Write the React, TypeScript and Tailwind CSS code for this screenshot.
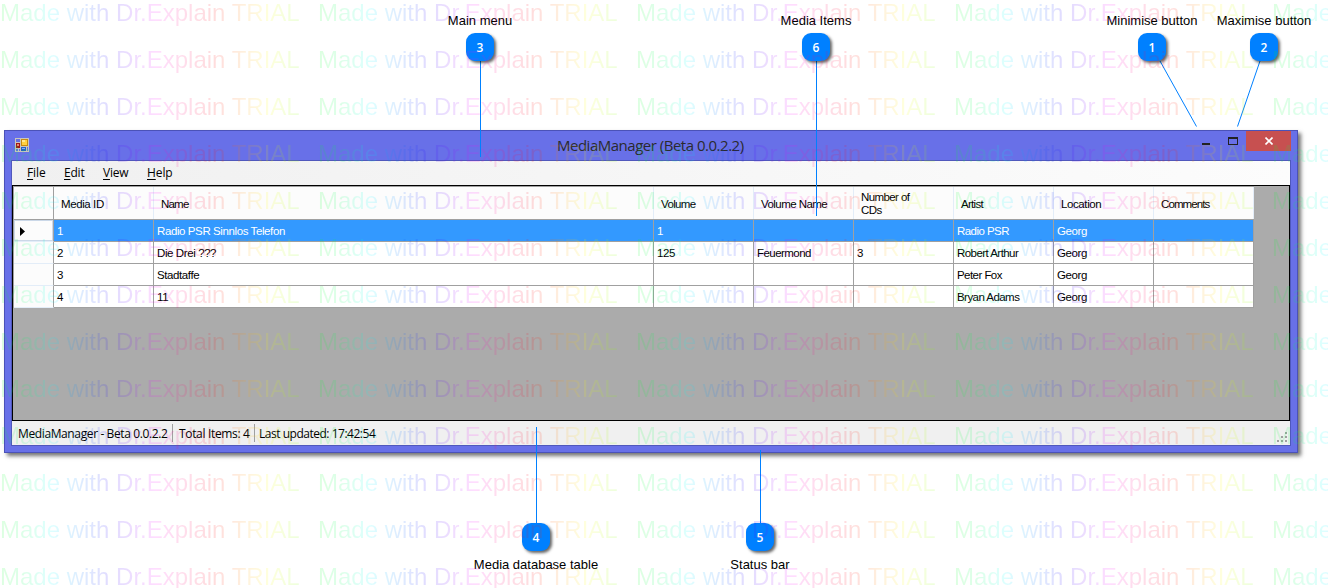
import React from "react";

const columns = [
  { label: "Media ID", width: "w-[100px]", text: "tracking-[-0.4px]" },
  { label: "Name", width: "w-[500px]", text: "tracking-[-0.8px]" },
  { label: "Volume", width: "w-[100px]", text: "tracking-[-0.65px]" },
  { label: "Volume Name", width: "w-[100px]", text: "tracking-[-0.55px] whitespace-nowrap" },
  { label: "Number of CDs", width: "w-[100px]", text: "tracking-[-0.6px]" },
  { label: "Artist", width: "w-[100px]", text: "tracking-[-0.7px]" },
  { label: "Location", width: "w-[100px]", text: "tracking-[-0.4px]" },
  { label: "Comments", width: "w-[100px]", text: "tracking-[-0.9px]" },
];

const rows = [
  ["1", "Radio PSR Sinnlos Telefon", "1", "", "", "Radio PSR", "Georg", ""],
  ["2", "Die Drei ???", "125", "Feuermond", "3", "Robert Arthur", "Georg", ""],
  ["3", "Stadtaffe", "", "", "", "Peter Fox", "Georg", ""],
  ["4", "11", "", "", "", "Bryan Adams", "Georg", ""],
];

const callouts = [
  { n: 1, label: "Minimise button", box: "left-[1092px] top-[14px]" },
  { n: 2, label: "Maximise button", box: "left-[1204px] top-[14px]" },
  { n: 3, label: "Main menu", box: "left-[420px] top-[14px]" },
  { n: 6, label: "Media Items", box: "left-[756px] top-[14px]" },
  { n: 4, label: "Media database table", box: "left-[476px] top-[523px]", below: true },
  { n: 5, label: "Status bar", box: "left-[700px] top-[523px]", below: true },
];

function AppIcon() {
  return (
    <svg width="14" height="14" viewBox="0 0 14 14" shapeRendering="crispEdges">
      <rect width="14" height="14" fill="#c9c6bd" />
      <rect x="1" y="1" width="4" height="3" fill="#6870e0" />
      <rect x="6" y="1" width="7" height="7" fill="#c88a10" />
      <rect x="7" y="2" width="5" height="5" fill="#ffd040" />
      <rect x="7" y="2" width="3" height="2" fill="#ffe890" />
      <rect x="1" y="5" width="4" height="5" fill="#a01818" />
      <rect x="2" y="6" width="2" height="2" fill="#f08070" />
      <rect x="6" y="9" width="5" height="4" fill="#2860c0" />
      <rect x="7" y="10" width="3" height="1" fill="#80b0ff" />
      <rect x="1" y="11" width="2" height="2" fill="#6870e0" />
      <rect x="4" y="11" width="1" height="2" fill="#6870e0" />
      <rect x="12" y="9" width="1" height="4" fill="#6870e0" />
    </svg>
  );
}

function TitleBar() {
  return (
    <div className="flex h-[29px] items-start">
      <div className="w-[400px] pl-[10px] pt-[7px]">
        <AppIcon />
      </div>
      <div className="flex-1 pl-[152px] pt-[4px] font-['Open_Sans',sans-serif] text-[15px] leading-[20px] text-[#2a2a2e]">
        <span className="whitespace-nowrap tracking-[-0.49px]">MediaManager (Beta 0.0.2.2)</span>
      </div>
      <div className="flex items-start">
        <div className="flex h-[20px] w-[26px] items-start pt-[12px]">
          <div className="h-[2px] w-[8px] bg-[#222]" />
        </div>
        <div className="flex h-[20px] w-[18px] items-start pt-[6px]">
          <div className="h-[8px] w-[10px] border border-t-2 border-[#222]" />
        </div>
        <div className="mr-[6px] flex h-[20px] w-[45px] items-center justify-center bg-[#c75050]">
          <svg width="8" height="8" viewBox="0 0 8 8" stroke="white" strokeWidth="1.6">
            <path d="M0.5 0.5 7.5 7.5M7.5 0.5 0.5 7.5" />
          </svg>
        </div>
      </div>
    </div>
  );
}

function MenuBar() {
  const items = [
    ["F", "ile", "w-[37px] tracking-[-0.1px]"],
    ["E", "dit", "w-[39px] tracking-[-0.2px]"],
    ["V", "iew", "w-[44px] tracking-[-0.2px]"],
    ["H", "elp", "w-[40px] tracking-[-0.1px]"],
  ];
  return (
    <div className="flex h-[24px] items-center bg-linear-to-r from-[#f0f0f0] to-[#fcfcfc] pl-[15px] font-['Open_Sans',sans-serif] text-[12px] text-black">
      {items.map(([key, rest, cls]) => (
        <div key={key} className={cls}>
          <span className="underline underline-offset-2">{key}</span>
          {rest}
        </div>
      ))}
    </div>
  );
}

function DataGrid() {
  return (
    <div className="h-[236px] border border-black bg-[#ababab] font-['Liberation_Sans',sans-serif] text-[11.5px] text-black">
      <div className="w-[1241px] border-l border-t border-[#a0a0a0]">
        <div className="flex h-[33px] border-b border-[#a0a0a0] bg-[#fcfcfc]">
          <div className="w-[40px] border-r border-[#a0a0a0]" />
          {columns.map((c) => (
            <div key={c.label} className={`${c.width} flex items-center border-r border-[#e3edf8] pl-[7px] pr-[30px] pt-[2px] leading-[13px] ${c.text}`}>
              {c.label}
            </div>
          ))}
        </div>
        {rows.map((r, i) => (
          <div key={i} className={`flex h-[22px] ${i === 0 ? "bg-[#3399ff] text-white" : "bg-white"}`}>
            <div
              className={`flex w-[40px] items-center border-b border-r border-b-[#e3edf8] border-r-[#a0a0a0] bg-[#fcfcfc] pl-[6px] ${i === 0 ? "shadow-[inset_1px_1px_0_#cbd8e8,inset_-1px_-1px_0_#cbd8e8]" : ""}`}
            >
              {i === 0 && (
                <svg width="5" height="9" viewBox="0 0 5 9" className="mt-px">
                  <path d="M0 0 5 4.5 0 9Z" fill="black" />
                </svg>
              )}
            </div>
            {r.map((v, j) => (
              <div
                key={j}
                className={`${columns[j].width} flex items-center whitespace-nowrap border-b border-r border-[#a0a0a0] pl-[3px] pt-[2px] ${j === 7 || j === 5 || j === 3 ? "tracking-[-0.55px]" : "tracking-[-0.4px]"}`}
              >
                {v}
              </div>
            ))}
          </div>
        ))}
      </div>
    </div>
  );
}

function StatusBar() {
  return (
    <div className="flex h-[24px] items-center bg-[#f0f0f0] pl-[6px] font-['Open_Sans',sans-serif] text-[12px] text-black">
      <div className="w-[154px] whitespace-nowrap pt-px tracking-[-0.38px]">MediaManager - Beta 0.0.2.2</div>
      <div className="h-[18px] w-px bg-[#a0a0a0]" />
      <div className="w-[81px] whitespace-nowrap pl-[6px] pt-px tracking-[-0.33px]">Total Items: 4</div>
      <div className="h-[18px] w-px bg-[#a0a0a0]" />
      <div className="flex-1 whitespace-nowrap pl-[4px] pt-px tracking-[-0.48px]">Last updated: 17:42:54</div>
      <svg width="11" height="11" viewBox="0 0 11 11" fill="#a0a0a0" className="mr-[2px] self-end mb-[2px]" shapeRendering="crispEdges">
        <rect x="8" y="0" width="2" height="2" />
        <rect x="4" y="4" width="2" height="2" />
        <rect x="8" y="4" width="2" height="2" />
        <rect x="0" y="8" width="2" height="2" />
        <rect x="4" y="8" width="2" height="2" />
        <rect x="8" y="8" width="2" height="2" />
      </svg>
    </div>
  );
}

function Watermark() {
  const tiles = Array.from({ length: 65 }, (_, i) => i);
  return (
    <div className="pointer-events-none absolute inset-0 overflow-hidden opacity-[0.13]">
      <div className="-mt-px grid w-[1590px] auto-rows-[47px] grid-cols-5">
        {tiles.map((i) => (
          <div key={i} className="font-['Liberation_Sans',sans-serif] text-[24px] leading-[27px]" aria-hidden="true">
            <span className="whitespace-nowrap bg-[linear-gradient(90deg,#00ff20_0%,#00ff60_8%,#00ffff_17%,#0080ff_26%,#2000ff_36%,#6000ff_42%,#ff00ff_52%,#ff0080_60%,#ff0000_72%,#ff8000_80%,#ffff00_89%,#80ff00_100%)] bg-clip-text text-transparent">
              Made with Dr.Explain TRIAL
            </span>
          </div>
        ))}
      </div>
    </div>
  );
}

export default function App() {
  return (
    <div className="relative h-[588px] w-[1328px] overflow-hidden bg-white pl-[4px] pt-[130px]">
      <div className="h-[323px] w-[1294px] border border-[#4b52b8] bg-[#6870e8] shadow-[3px_3px_4px_rgba(0,0,0,0.55)]">
        <TitleBar />
        <div className="ml-[6px] w-[1280px] border border-[#5058bc]">
          <MenuBar />
          <DataGrid />
          <StatusBar />
        </div>
      </div>

      <svg className="absolute inset-0" width="1328" height="588" stroke="#0080ff" fill="none">
        <path d="M480.5 60V157M816.5 60V216M536.5 427V525M760.5 450V525" />
        <path d="M1160 61 1196.500 126.500M1260 61 1237.500 126.500" />
      </svg>

      {callouts.map((c) => (
        <div key={c.n} className={`absolute flex w-[120px] items-center ${c.below ? "flex-col-reverse" : "flex-col"} ${c.box} font-['Liberation_Sans',sans-serif]`}>
          <div className={`whitespace-nowrap text-[13px] leading-[14px] text-black ${c.below ? "mt-[7px]" : "mb-[5px]"}`}>{c.label}</div>
          <div className="flex size-[28px] items-center justify-center rounded-[9px] bg-[#0080ff] pt-px font-['Open_Sans',sans-serif] text-[12px] font-semibold text-white shadow-[2px_2px_3px_rgba(0,0,0,0.6)]">
            {c.n}
          </div>
        </div>
      ))}

      <Watermark />
    </div>
  );
}
